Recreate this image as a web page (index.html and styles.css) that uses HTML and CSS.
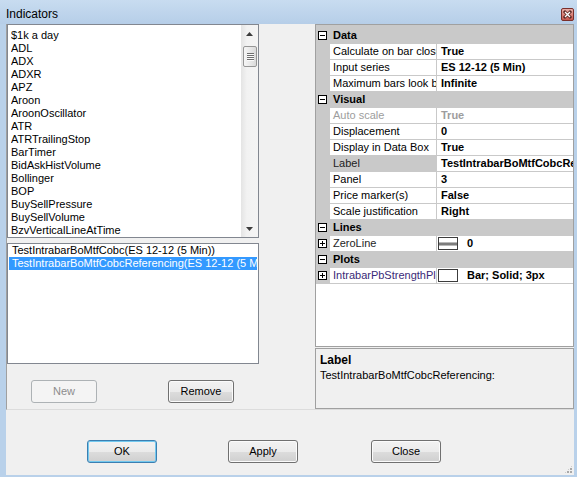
FILE: index.html
```html
<!DOCTYPE html>
<html>
<head>
<meta charset="utf-8">
<title>Indicators</title>
<link rel="stylesheet" href="styles.css">
</head>
<body>
<div class="window">
  <div class="titlebar">
    <span class="title">Indicators</span>
    <span class="close">
      <svg width="13" height="13" viewBox="0 0 13 13">
        <defs>
          <linearGradient id="cg" x1="0" y1="0" x2="0" y2="1">
            <stop offset="0" stop-color="#eab3ad"/>
            <stop offset="0.5" stop-color="#d8837b"/>
            <stop offset="1" stop-color="#c4544b"/>
          </linearGradient>
        </defs>
        <rect x="0.5" y="0.5" width="12" height="12" rx="1.5" fill="url(#cg)" stroke="#7a2f2a"/>
        <path d="M4 4 L9 9 M9 4 L4 9" stroke="#5a2622" stroke-width="3" stroke-linecap="square"/>
        <path d="M4 4 L9 9 M9 4 L4 9" stroke="#ffffff" stroke-width="1.4"/>
      </svg>
    </span>
  </div>
  <div class="client">
    <div class="split">
      <div class="left">
        <div class="list list-all">
          <div class="items">
            <div class="item">$1k a day</div>
            <div class="item">ADL</div>
            <div class="item">ADX</div>
            <div class="item">ADXR</div>
            <div class="item">APZ</div>
            <div class="item">Aroon</div>
            <div class="item">AroonOscillator</div>
            <div class="item">ATR</div>
            <div class="item">ATRTrailingStop</div>
            <div class="item">BarTimer</div>
            <div class="item">BidAskHistVolume</div>
            <div class="item">Bollinger</div>
            <div class="item">BOP</div>
            <div class="item">BuySellPressure</div>
            <div class="item">BuySellVolume</div>
            <div class="item">BzvVerticalLineAtTime</div>
          </div>
          <div class="vscroll">
            <div class="sb-btn">
              <svg width="7" height="4" viewBox="0 0 7 4"><path d="M3.5 0 L7 4 L0 4 Z" fill="#3c3c3c"/></svg>
            </div>
            <div class="thumb"><div class="grip"></div></div>
            <div class="sb-space"></div>
            <div class="sb-btn">
              <svg width="7" height="4" viewBox="0 0 7 4"><path d="M0 0 L7 0 L3.5 4 Z" fill="#3c3c3c"/></svg>
            </div>
          </div>
        </div>
        <div class="list list-applied">
          <div class="item">TestIntrabarBoMtfCobc(ES 12-12 (5 Min))</div>
          <div class="item sel">TestIntrabarBoMtfCobcReferencing(ES 12-12 (5 Min))</div>
        </div>
        <div class="left-buttons">
          <button class="btn btn-small disabled">New</button>
          <button class="btn btn-small btn-remove">Remove</button>
        </div>
      </div>
      <div class="right">
        <div class="grid">
          <div class="grid-top"></div>

          <div class="row cat">
            <div class="gutter"><svg width="9" height="9" viewBox="0 0 9 9"><rect x="0.5" y="0.5" width="8" height="8" fill="#fff" stroke="#000"/><path d="M2 4.5h5" stroke="#000"/></svg></div>
            <div class="cat-label">Data</div>
          </div>
          <div class="row">
            <div class="gutter"></div>
            <div class="name">Calculate on bar close</div>
            <div class="value">True</div>
          </div>
          <div class="row">
            <div class="gutter"></div>
            <div class="name">Input series</div>
            <div class="value">ES 12-12 (5 Min)</div>
          </div>
          <div class="row">
            <div class="gutter"></div>
            <div class="name">Maximum bars look back</div>
            <div class="value">Infinite</div>
          </div>

          <div class="row cat">
            <div class="gutter"><svg width="9" height="9" viewBox="0 0 9 9"><rect x="0.5" y="0.5" width="8" height="8" fill="#fff" stroke="#000"/><path d="M2 4.5h5" stroke="#000"/></svg></div>
            <div class="cat-label">Visual</div>
          </div>
          <div class="row readonly">
            <div class="gutter"></div>
            <div class="name">Auto scale</div>
            <div class="value">True</div>
          </div>
          <div class="row">
            <div class="gutter"></div>
            <div class="name">Displacement</div>
            <div class="value">0</div>
          </div>
          <div class="row">
            <div class="gutter"></div>
            <div class="name">Display in Data Box</div>
            <div class="value">True</div>
          </div>
          <div class="row selected">
            <div class="gutter"></div>
            <div class="name">Label</div>
            <div class="value">TestIntrabarBoMtfCobcReferencing</div>
          </div>
          <div class="row">
            <div class="gutter"></div>
            <div class="name">Panel</div>
            <div class="value">3</div>
          </div>
          <div class="row">
            <div class="gutter"></div>
            <div class="name">Price marker(s)</div>
            <div class="value">False</div>
          </div>
          <div class="row">
            <div class="gutter"></div>
            <div class="name">Scale justification</div>
            <div class="value">Right</div>
          </div>

          <div class="row cat">
            <div class="gutter"><svg width="9" height="9" viewBox="0 0 9 9"><rect x="0.5" y="0.5" width="8" height="8" fill="#fff" stroke="#000"/><path d="M2 4.5h5" stroke="#000"/></svg></div>
            <div class="cat-label">Lines</div>
          </div>
          <div class="row">
            <div class="gutter"><svg width="9" height="9" viewBox="0 0 9 9"><rect x="0.5" y="0.5" width="8" height="8" fill="#fff" stroke="#000"/><path d="M2 4.5h5M4.5 2v5" stroke="#000"/></svg></div>
            <div class="name name-line">ZeroLine</div>
            <div class="value has-swatch"><span class="swatch swatch-line"></span>0</div>
          </div>

          <div class="row cat">
            <div class="gutter"><svg width="9" height="9" viewBox="0 0 9 9"><rect x="0.5" y="0.5" width="8" height="8" fill="#fff" stroke="#000"/><path d="M2 4.5h5" stroke="#000"/></svg></div>
            <div class="cat-label">Plots</div>
          </div>
          <div class="row">
            <div class="gutter"><svg width="9" height="9" viewBox="0 0 9 9"><rect x="0.5" y="0.5" width="8" height="8" fill="#fff" stroke="#000"/><path d="M2 4.5h5M4.5 2v5" stroke="#000"/></svg></div>
            <div class="name name-plot">IntrabarPbStrengthPlot</div>
            <div class="value has-swatch"><span class="swatch"></span>Bar; Solid; 3px</div>
          </div>
        </div>
        <div class="desc">
          <div class="desc-title">Label</div>
          <div class="desc-text">TestIntrabarBoMtfCobcReferencing:</div>
        </div>
      </div>
    </div>
    <div class="footer">
      <button class="btn btn-big default">OK</button>
      <button class="btn btn-big btn-apply">Apply</button>
      <button class="btn btn-big btn-close">Close</button>
      <span class="grip-corner"></span>
    </div>
  </div>
</div>
</body>
</html>
```

FILE: styles.css
```css
* { box-sizing: border-box; }
html, body { margin: 0; padding: 0; }
body {
  width: 577px;
  height: 477px;
  overflow: hidden;
  background: #b9d1ea;
  font-family: "Liberation Sans", Arial, sans-serif;
  font-size: 11px;
  color: #000;
}
.window {
  width: 577px;
  height: 477px;
  display: flex;
  flex-direction: column;
}
.titlebar {
  height: 24px;
  flex: none;
  display: flex;
  background: linear-gradient(#c8dcf0, #b6cee8);
}
.title {
  padding: 6px 0 0 6px;
  font-size: 12px;
  line-height: 16px;
}
.close {
  margin: 8px 3px 0 auto;
  width: 13px;
  height: 13px;
  display: block;
}
.close svg { display: block; }
.client {
  flex: 1;
  display: flex;
  flex-direction: column;
  margin: 0 3px 2px 6px;
  background: #f0f0f0;
}
.split {
  height: 386px;
  flex: none;
  display: flex;
  border-left: 1px solid #a0a0a0;
  border-bottom: 1px solid #dcdcdc;
}
.left {
  width: 308px;
  flex: none;
  display: flex;
  flex-direction: column;
}
.list {
  width: 252px;
  border: 1px solid #828790;
  background: #fff;
  overflow: hidden;
}
.list-all {
  height: 214px;
  display: flex;
}
.list-all .items {
  flex: 1;
  padding: 4px 0 0 3px;
  overflow: hidden;
}
.item {
  height: 13px;
  line-height: 13px;
  white-space: nowrap;
  overflow: hidden;
}
.vscroll {
  width: 17px;
  flex: none;
  display: flex;
  flex-direction: column;
  background: linear-gradient(to right, #e4e4e4, #f2f2f2 35%, #f4f4f4);
}
.sb-btn {
  height: 17px;
  flex: none;
  display: flex;
  align-items: center;
  justify-content: center;
}
.sb-btn svg { display: block; }
.thumb {
  height: 21px;
  margin: 4px 1px 0 2px;
  border: 1px solid #969696;
  border-radius: 2px;
  background: linear-gradient(to right, #f6f6f6, #e9e9e9 50%, #dadada);
  display: flex;
  align-items: center;
  justify-content: center;
}
.grip {
  width: 7px;
  height: 8px;
  background: repeating-linear-gradient(#6e6e6e 0 1px, #fafafa 1px 2px);
}
.sb-space { flex: 1; }
.list-applied {
  height: 121px;
  margin-top: 5px;
  padding: 0 1px;
}
.list-applied .item { padding-left: 3px; }
.item.sel {
  background: #3399ff;
  color: #fff;
}
.left-buttons {
  display: flex;
  margin-top: 16px;
  padding-left: 24px;
}
.btn {
  height: 23px;
  padding: 0;
  border: 1px solid #707070;
  border-radius: 3px;
  background: linear-gradient(#f2f2f2 0%, #ebebeb 50%, #dddddd 50%, #cfcfcf 100%);
  box-shadow: inset 0 0 0 1px #fbfbfb;
  font-family: "Liberation Sans", Arial, sans-serif;
  font-size: 11px;
  color: #000;
  line-height: 21px;
}
.btn-small { width: 66px; }
.btn-remove { margin-left: 71px; }
.btn.disabled {
  border-color: #adb2b5;
  background: #f4f4f4;
  box-shadow: none;
  color: #8d8d8d;
}
.right {
  width: 259px;
  flex: none;
  display: flex;
  flex-direction: column;
}
.grid {
  height: 323px;
  flex: none;
  border: 1px solid #a0a0a0;
  background: #fff;
  display: flex;
  flex-direction: column;
}
.grid-top {
  height: 3px;
  flex: none;
  background: #c9c9c9;
}
.row {
  height: 16px;
  flex: none;
  display: flex;
  border-bottom: 1px solid #c9c9c9;
  line-height: 15px;
  white-space: nowrap;
}
.gutter {
  width: 14px;
  flex: none;
  background: #c9c9c9;
  padding: 3px 0 0 2px;
}
.gutter svg { display: block; }
.name {
  width: 106px;
  flex: none;
  padding-left: 3px;
  overflow: hidden;
}
.value {
  flex: 1;
  min-width: 0;
  border-left: 1px solid #c9c9c9;
  padding-left: 4px;
  font-weight: bold;
  overflow: hidden;
  display: flex;
}
.cat {
  background: #c9c9c9;
  font-weight: bold;
}
.cat-label { padding-left: 3px; }
.readonly .name,
.readonly .value { color: #9d9d9d; }
.selected .name {
  background: #c9c9c9;
  color: #222;
}
.name-line { color: #1e1e1e; }
.name-plot { color: #3a2a78; }
.value.has-swatch { padding-left: 1px; }
.swatch {
  width: 20px;
  height: 13px;
  flex: none;
  margin: 1px 9px 0 0;
  border: 1px solid #3c3c3c;
  background: #fff;
}
.swatch-line {
  background: linear-gradient(#fff 0 4px, #b8b8b8 4px 5px, #7c7c7c 5px 7px, #b8b8b8 7px 8px, #fff 8px);
}
.desc {
  margin-top: 1px;
  flex: 1;
  border: 1px solid #a0a0a0;
  background: #f0f0f0;
  padding: 4px 4px 0 4px;
  line-height: 14px;
}
.desc-title {
  font-weight: bold;
  font-size: 12px;
}
.desc-text { margin-top: 1px; }
.footer {
  flex: 1;
  display: flex;
  align-items: flex-start;
  padding: 30px 0 0 81px;
}
.btn-big { width: 70px; flex: none; }
.btn.default {
  border-color: #3c7fb1;
  box-shadow: inset 0 0 0 1px #73c9ef;
}
.btn-apply { margin-left: 71px; }
.btn-close { margin-left: 73px; }
.grip-corner {
  margin-left: auto;
  align-self: flex-end;
  width: 9px;
  height: 9px;
  margin-right: 1px;
  margin-bottom: 1px;
  background-image: radial-gradient(circle at 1px 1px, #a9a9a9 1px, transparent 1.2px);
  background-size: 3px 3px;
  clip-path: polygon(100% 0, 100% 100%, 0 100%);
}
```
